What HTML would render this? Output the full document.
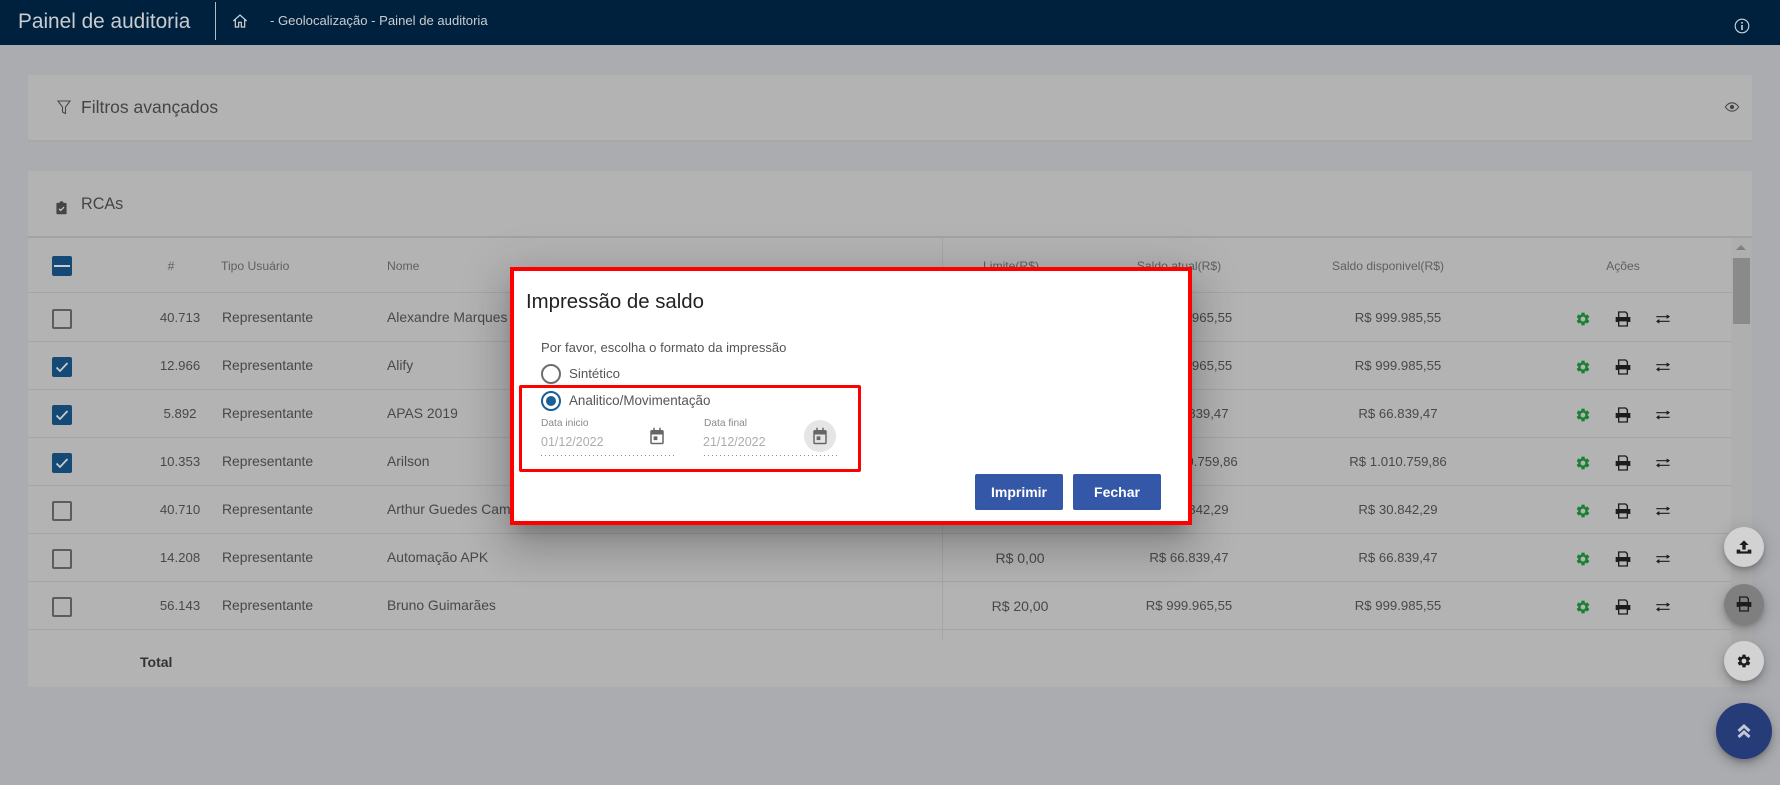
<!DOCTYPE html>
<html lang="pt-BR"><head><meta charset="utf-8"><title>Painel de auditoria</title>
<style>
html,body{margin:0;padding:0;width:1780px;height:785px;overflow:hidden;background:#abacb0;font-family:"Liberation Sans",sans-serif;color:#484848}
*{box-sizing:border-box}
.a{position:absolute}
.t{position:absolute;white-space:nowrap;line-height:20px;height:20px;font-size:13.9px}
.c{transform:translateX(-50%);font-size:13.2px;margin-top:1px}
.h{font-size:12.15px;color:#5f5f5f;margin-top:0}
.l{position:absolute;left:28px;width:1703px;height:2px;background:#a5a5a5}
.cb{position:absolute;left:52px;width:20px;height:20px;border:2px solid #5c5c5c;border-radius:2px}
.cb.on{background:#164a76;border-color:#164a76}
.cb svg{position:absolute;left:-2px;top:-2px;width:20px;height:20px}
svg.i{position:absolute;width:16px;height:16px}
.g{fill:#1b8035}
.dots{position:absolute;top:455px;width:134px;height:1px;background:repeating-linear-gradient(90deg,#8a8a8a 0 1px,transparent 1px 4px)}
.fab{position:absolute;left:1724px;width:40px;height:40px;border-radius:50%;background:#d2d2d2;box-shadow:0 3px 5px -1px rgba(0,0,0,.2),0 6px 10px 0 rgba(0,0,0,.14),0 1px 18px 0 rgba(0,0,0,.12)}
.fab svg{position:absolute;left:12px;top:12px;width:16px;height:16px}
</style></head><body>
<svg width="0" height="0" style="position:absolute">
<defs>
<symbol id="gear" viewBox="0 0 24 24"><path d="M19.14 12.94c.04-.3.06-.61.06-.94 0-.32-.02-.64-.07-.94l2.03-1.58c.18-.14.23-.41.12-.61l-1.92-3.32c-.12-.22-.37-.29-.59-.22l-2.39.96c-.5-.38-1.03-.7-1.62-.94l-.36-2.54c-.04-.24-.24-.41-.48-.41h-3.84c-.24 0-.43.17-.47.41l-.36 2.54c-.59.24-1.13.57-1.62.94l-2.39-.96c-.22-.08-.47 0-.59.22L2.74 8.87c-.12.21-.08.47.12.61l2.03 1.58c-.05.3-.09.63-.09.94s.02.64.07.94l-2.03 1.58c-.18.14-.23.41-.12.61l1.92 3.32c.12.22.37.29.59.22l2.39-.96c.5.38 1.03.7 1.62.94l.36 2.54c.05.24.24.41.48.41h3.84c.24 0 .44-.17.47-.41l.36-2.54c.59-.24 1.13-.56 1.62-.94l2.39.96c.22.08.47 0 .59-.22l1.92-3.32c.12-.22.07-.47-.12-.61l-2.01-1.58zM12 15.6c-1.98 0-3.6-1.62-3.6-3.6s1.62-3.6 3.6-3.6 3.6 1.62 3.6 3.6-1.62 3.6-3.6 3.6z"/></symbol>
<symbol id="print" viewBox="0 0 24 24"><path d="M5.500 10V1.500h10.500l2.500 2.500v6" fill="none" stroke="#1c1c1c" stroke-width="2"/><path d="M1 9h22v7.500h-3.500V15h-15v1.500H1z" fill="#1c1c1c"/><path d="M5.500 14.500h13v8h-13z" fill="none" stroke="#1c1c1c" stroke-width="2"/></symbol>
<symbol id="swap" viewBox="0 0 24 24"><path d="M2 8.500h17M22 15.500H5" stroke="#1c1c1c" stroke-width="1.800" fill="none"/><path d="M17.500 5l5 3.500-5 3.500zM6.500 12l-5 3.500 5 3.500z" fill="#1c1c1c"/></symbol>
<symbol id="cal" viewBox="0 0 24 24"><path d="M7 1h2v3h6V1h2v3h2c1.100 0 2 .9 2 2v15c0 1.100-.9 2-2 2H5c-1.100 0-2-.9-2-2V6c0-1.100.9-2 2-2h2zM5 10v11h14V10z" fill="#666" fill-rule="evenodd"/><path d="M7.500 12.500h5v5h-5z" fill="#666"/></symbol>
</defs></svg>

<!-- cards -->
<div class="a" style="left:28px;top:75px;width:1724px;height:67px;background:#b3b3b3;border-bottom:2px solid #a8a8a8"></div>
<div class="a" style="left:28px;top:171px;width:1724px;height:516px;background:#b3b3b3"></div>
<div class="a" style="left:1731px;top:238px;width:21px;height:449px;background:#afafaf"></div>
<div class="a" style="left:1733px;top:258px;width:17px;height:66px;background:#8a8a8a"></div>
<div class="a" style="left:1736px;top:245px;width:0;height:0;border-left:5px solid transparent;border-right:5px solid transparent;border-bottom:5px solid #808080"></div>

<!-- header -->
<div class="a" style="left:0;top:0;width:1780px;height:45px;background:#00213d"></div>
<div class="t" style="left:18px;top:11px;font-size:20.800px;line-height:22px;height:22px;color:#c8ccd0">Painel de auditoria</div>
<div class="a" style="left:215px;top:2px;width:1px;height:38px;background:#b4bac0"></div>
<svg class="i" style="left:232px;top:13px;width:16px;height:16px" viewBox="0 0 24 24" fill="none" stroke="#d0d4d8" stroke-width="1.800"><path d="M2 12L12 3l10 9M5 10v11h5v-7h4v7h5V10"/></svg>
<div class="t" style="left:270px;top:11px;font-size:13.100px;color:#c8ccd0">- Geolocalização - Painel de auditoria</div>
<svg class="i" style="left:1734px;top:18px;width:16px;height:16px" viewBox="0 0 16 16" fill="none" stroke="#d0d4d8" stroke-width="1.100"><circle cx="8" cy="8" r="6.800"/><path d="M8 7v5M8 4v1.600" stroke-width="1.600"/></svg>

<!-- filters -->
<svg class="i" style="left:57px;top:100px;width:14px;height:15px" viewBox="0 0 14 15" fill="none" stroke="#4a4a4a" stroke-width="1.100"><path d="M1 1h12L8.500 7v6.500l-3-1.500V7z"/></svg>
<div class="t" style="left:81px;top:97px;font-size:17.500px;color:#454545">Filtros avançados</div>
<svg class="i" style="left:1724px;top:102px;width:16px;height:10px" viewBox="0 0 18 12" fill="none" stroke="#454545" stroke-width="1.300"><path d="M1 6c2-3 5-5 8-5s6 2 8 5c-2 3-5 5-8 5S3 9 1 6z"/><circle cx="9" cy="6" r="1.900" fill="#454545"/></svg>

<!-- RCAs -->
<svg class="i" style="left:56px;top:200px;width:11px;height:15px" viewBox="0 0 13 16"><path d="M1.500 2.500H4C4.300 1.300 5.300.5 6.500.5S8.700 1.300 9 2.500h2.500c.6 0 1 .4 1 1V15c0 .6-.4 1-1 1h-10c-.6 0-1-.4-1-1V3.500c0-.6.4-1 1-1z" fill="#454545"/><path d="M3.500 9.500l2 2 4-4" stroke="#c8c8c8" stroke-width="1.500" fill="none"/></svg>
<div class="t" style="left:81px;top:194px;font-size:16.200px;color:#454545">RCAs</div>
<div class="l" style="top:236px;width:1724px;height:2px;background:#a2a2a2"></div>
<div class="a" style="left:942px;top:238px;width:1px;height:401px;background:#a5a5a5"></div>

<div class="cb on" style="top:256px"><svg viewBox="0 0 20 20"><path d="M2 10h16" stroke="#c8ccd0" stroke-width="2"/></svg></div>
<div class="t h c" style="left:171px;top:256px">#</div>
<div class="t h" style="left:221px;top:256px">Tipo Usuário</div>
<div class="t h" style="left:387px;top:256px">Nome</div>
<div class="t h c" style="left:1011px;top:256px">Limite(R$)</div>
<div class="t h c" style="left:1179px;top:256px">Saldo atual(R$)</div>
<div class="t h c" style="left:1388px;top:256px">Saldo disponivel(R$)</div>
<div class="t h c" style="left:1623px;top:256px">Ações</div>

<div class="l" style="top:292px;height:1px"></div>
<div class="l" style="top:341px;height:1px"></div>
<div class="l" style="top:389px;height:1px"></div>
<div class="l" style="top:437px;height:1px"></div>
<div class="l" style="top:485px;height:1px"></div>
<div class="l" style="top:533px;height:1px"></div>
<div class="l" style="top:581px;height:1px"></div>
<div class="l" style="top:629px;height:1px"></div>

<!-- row 1 -->
<div class="cb" style="top:309px"></div>
<div class="t c" style="left:180px;top:307px">40.713</div><div class="t" style="left:222px;top:307px">Representante</div><div class="t" style="left:387px;top:307px">Alexandre Marques</div>
<div class="t c" style="left:1189px;top:307px">R$ 999.965,55</div><div class="t c" style="left:1398px;top:307px">R$ 999.985,55</div>
<svg class="i g" style="left:1575px;top:311px"><use href="#gear"/></svg><svg class="i" style="left:1615px;top:311px"><use href="#print"/></svg><svg class="i" style="left:1655px;top:311px"><use href="#swap"/></svg>
<!-- row 2 -->
<div class="cb on" style="top:357px"><svg viewBox="0 0 20 20"><path d="M4.500 10.500l3.500 3.500 7.500-8" stroke="#c8ccd0" stroke-width="1.700" fill="none"/></svg></div>
<div class="t c" style="left:180px;top:355px">12.966</div><div class="t" style="left:222px;top:355px">Representante</div><div class="t" style="left:387px;top:355px">Alify</div>
<div class="t c" style="left:1189px;top:355px">R$ 999.965,55</div><div class="t c" style="left:1398px;top:355px">R$ 999.985,55</div>
<svg class="i g" style="left:1575px;top:359px"><use href="#gear"/></svg><svg class="i" style="left:1615px;top:359px"><use href="#print"/></svg><svg class="i" style="left:1655px;top:359px"><use href="#swap"/></svg>
<!-- row 3 -->
<div class="cb on" style="top:405px"><svg viewBox="0 0 20 20"><path d="M4.500 10.500l3.500 3.500 7.500-8" stroke="#c8ccd0" stroke-width="1.700" fill="none"/></svg></div>
<div class="t c" style="left:180px;top:403px">5.892</div><div class="t" style="left:222px;top:403px">Representante</div><div class="t" style="left:387px;top:403px">APAS 2019</div>
<div class="t c" style="left:1189px;top:403px">R$ 66.839,47</div><div class="t c" style="left:1398px;top:403px">R$ 66.839,47</div>
<svg class="i g" style="left:1575px;top:407px"><use href="#gear"/></svg><svg class="i" style="left:1615px;top:407px"><use href="#print"/></svg><svg class="i" style="left:1655px;top:407px"><use href="#swap"/></svg>
<!-- row 4 -->
<div class="cb on" style="top:453px"><svg viewBox="0 0 20 20"><path d="M4.500 10.500l3.500 3.500 7.500-8" stroke="#c8ccd0" stroke-width="1.700" fill="none"/></svg></div>
<div class="t c" style="left:180px;top:451px">10.353</div><div class="t" style="left:222px;top:451px">Representante</div><div class="t" style="left:387px;top:451px">Arilson</div>
<div class="t c" style="left:1189px;top:451px">R$ 1.010.759,86</div><div class="t c" style="left:1398px;top:451px">R$ 1.010.759,86</div>
<svg class="i g" style="left:1575px;top:455px"><use href="#gear"/></svg><svg class="i" style="left:1615px;top:455px"><use href="#print"/></svg><svg class="i" style="left:1655px;top:455px"><use href="#swap"/></svg>
<!-- row 5 -->
<div class="cb" style="top:501px"></div>
<div class="t c" style="left:180px;top:499px">40.710</div><div class="t" style="left:222px;top:499px">Representante</div><div class="t" style="left:387px;top:499px">Arthur Guedes Campos</div>
<div class="t c" style="left:1189px;top:499px">R$ 30.842,29</div><div class="t c" style="left:1398px;top:499px">R$ 30.842,29</div>
<svg class="i g" style="left:1575px;top:503px"><use href="#gear"/></svg><svg class="i" style="left:1615px;top:503px"><use href="#print"/></svg><svg class="i" style="left:1655px;top:503px"><use href="#swap"/></svg>
<!-- row 6 -->
<div class="cb" style="top:549px"></div>
<div class="t c" style="left:180px;top:547px">14.208</div><div class="t" style="left:222px;top:547px">Representante</div><div class="t" style="left:387px;top:547px">Automação APK</div>
<div class="t c" style="left:1020px;top:547px;font-size:14px">R$ 0,00</div><div class="t c" style="left:1189px;top:547px">R$ 66.839,47</div><div class="t c" style="left:1398px;top:547px">R$ 66.839,47</div>
<svg class="i g" style="left:1575px;top:551px"><use href="#gear"/></svg><svg class="i" style="left:1615px;top:551px"><use href="#print"/></svg><svg class="i" style="left:1655px;top:551px"><use href="#swap"/></svg>
<!-- row 7 -->
<div class="cb" style="top:597px"></div>
<div class="t c" style="left:180px;top:595px">56.143</div><div class="t" style="left:222px;top:595px">Representante</div><div class="t" style="left:387px;top:595px">Bruno Guimarães</div>
<div class="t c" style="left:1020px;top:595px;font-size:14px">R$ 20,00</div><div class="t c" style="left:1189px;top:595px">R$ 999.965,55</div><div class="t c" style="left:1398px;top:595px">R$ 999.985,55</div>
<svg class="i g" style="left:1575px;top:599px"><use href="#gear"/></svg><svg class="i" style="left:1615px;top:599px"><use href="#print"/></svg><svg class="i" style="left:1655px;top:599px"><use href="#swap"/></svg>

<div class="t" style="left:140px;top:652px;font-size:14px;font-weight:bold;color:#333">Total</div>

<!-- FABs -->
<div class="fab" style="top:527px"><svg viewBox="0 0 24 24"><path d="M12 2l7 7h-4.500v7h-5V9H5zM1 16h5.500v2.500h11V16H23v6H1z" fill="#1c1c1c"/></svg></div>
<div class="fab" style="top:584px;background:#7f7f7f"><svg viewBox="0 0 24 24"><use href="#print"/></svg></div>
<div class="fab" style="top:641px"><svg viewBox="0 0 24 24" fill="#1c1c1c"><use href="#gear"/></svg></div>
<div class="fab" style="left:1716px;top:703px;width:56px;height:56px;background:#253c78"><svg style="left:20px;top:20px" viewBox="0 0 16 16" fill="none" stroke="#c4c8d4" stroke-width="3"><path d="M2.500 8L8 3l5.500 5M2.500 14L8 9l5.500 5"/></svg></div>

<!-- modal -->
<div class="a" style="left:510px;top:267px;width:682px;height:258px;background:#fff;border:4px solid #fe0000;box-shadow:0 11px 15px -7px rgba(0,0,0,.2),0 24px 38px 3px rgba(0,0,0,.14),0 9px 46px 8px rgba(0,0,0,.12)"></div>
<div class="t" style="left:526px;top:292px;font-size:20.400px;color:#222">Impressão de saldo</div>
<div class="t" style="left:541px;top:338px;font-size:13.070px;color:#555">Por favor, escolha o formato da impressão</div>
<div class="a" style="left:541px;top:364px;width:20px;height:20px;border:2px solid #6e6e6e;border-radius:50%"></div>
<div class="t" style="left:569px;top:364px;font-size:13.300px;color:#555">Sintético</div>
<div class="a" style="left:519px;top:385px;width:342px;height:87px;border:3px solid #fe0000;border-radius:2px"></div>
<div class="a" style="left:541px;top:391px;width:20px;height:20px;border:2px solid #1a5f98;border-radius:50%"></div>
<div class="a" style="left:546px;top:396px;width:10px;height:10px;background:#1a5f98;border-radius:50%"></div>
<div class="t" style="left:569px;top:391px;font-size:13.400px;color:#555">Analitico/Movimentação</div>
<div class="t" style="left:541px;top:414px;font-size:10.200px;color:#8a8a8a">Data inicio</div>
<div class="t" style="left:704px;top:414px;font-size:10.200px;color:#8a8a8a">Data final</div>
<div class="t" style="left:541px;top:432px;font-size:12.500px;color:#adadad">01/12/2022</div>
<div class="t" style="left:703px;top:432px;font-size:12.500px;color:#adadad">21/12/2022</div>
<div class="dots" style="left:541px"></div>
<div class="dots" style="left:704px"></div>
<svg class="i" style="left:648px;top:427px;width:18px;height:18px"><use href="#cal"/></svg>
<div class="a" style="left:804px;top:420px;width:32px;height:32px;border-radius:50%;background:#e5e5e5"></div>
<svg class="i" style="left:811px;top:427px;width:18px;height:18px"><use href="#cal"/></svg>
<div class="a" style="left:975px;top:474px;width:88px;height:36px;background:#3457a8;border-radius:2px;color:#fff;font-weight:bold;font-size:14px;line-height:36px;text-align:center">Imprimir</div>
<div class="a" style="left:1073px;top:474px;width:88px;height:36px;background:#3457a8;border-radius:2px;color:#fff;font-weight:bold;font-size:14px;line-height:36px;text-align:center">Fechar</div>
</body></html>
